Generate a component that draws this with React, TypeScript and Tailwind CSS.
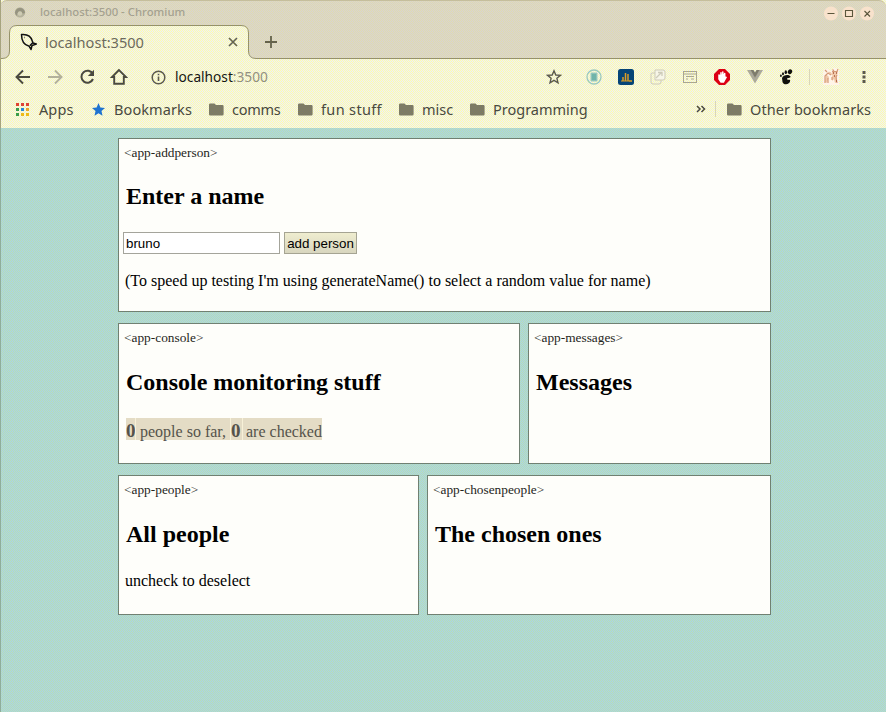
import type { ReactNode } from "react";

const UI = "font-['Noto_Sans',sans-serif]";

function Folder() {
  return (
    <svg width="15" height="13" viewBox="0 0 15 13" className="mt-px shrink-0">
      <path d="M1.2 0.5H5.5L7 2H13.4Q14.6 2 14.6 3.2V11.2Q14.6 12.5 13.4 12.5H1.2Q0 12.5 0 11.2V1.7Q0 .5 1.2 .5Z" fill="#7d7b65" />
    </svg>
  );
}

function Bookmark({ className, children }: { className: string; children: ReactNode }) {
  return <span className={`shrink-0 whitespace-nowrap text-[14.5px] leading-5 text-[#4a4a40] ${className}`}>{children}</span>;
}

function TitleBar() {
  return (
    <div className="flex h-[25px] items-center pl-[14px] pr-[10px]">
      <svg width="12" height="12" viewBox="0 0 12 12">
        <circle cx="6" cy="5.4" r="5.2" fill="#b5b29c" />
        <path d="M1 6A5 5 0 0 1 11 6L8.6 6.7A2.7 2.7 0 0 0 3.4 6.2L2.5 9Z" fill="#969480" />
        <circle cx="6" cy="6.5" r="2.2" fill="#cecbb3" />
      </svg>
      <span className="-mt-px ml-[14px] w-[145px] whitespace-nowrap text-[11.3px] font-medium leading-4 tracking-[0.03px] text-[#a4a190]">localhost:3500 - Chromium</span>
      <svg width="52" height="16" viewBox="0 0 52 16" className="ml-auto mt-[2px]">
        <g fill="#f8e2cc">
          <circle cx="7" cy="7.5" r="7" /><circle cx="25" cy="7.5" r="7" /><circle cx="43" cy="7.5" r="7" />
        </g>
        <path d="M3.5 7.5H10.5M21.5 4.5H28.5V10.5H21.5ZM40.5 5L46 10.5M46 5L40.5 10.5" fill="none" stroke="#5b563c" strokeWidth="1.1" />
      </svg>
    </div>
  );
}

function TabStrip() {
  return (
    <div className="relative h-[34px]">
      <svg width="886" height="34" viewBox="0 0 886 34" className="absolute inset-0">
        <defs>
          <pattern id="tabTexture" width="2" height="2" patternUnits="userSpaceOnUse">
            <path fill="#ffffaa" d="M0 0H2V2H0Z" />
            <path fill="#ededfa" d="M0 0H1V1H0ZM1 1H2V2H1Z" shapeRendering="crispEdges" />
          </pattern>
        </defs>
        <path d="M0 33.5H2Q9.5 33.5 9.5 26V8Q9.5 .5 17 .5H241Q248.5 .5 248.5 8V26Q248.5 33.5 256 33.5H886V34H0Z" fill="url(#tabTexture)" />
        <path d="M0 33.5H2Q9.5 33.5 9.5 26V8Q9.5 .5 17 .5H241Q248.5 .5 248.5 8V26Q248.5 33.5 256 33.5H886" fill="none" stroke="#96926b" />
      </svg>
      <div className="relative flex h-[34px] items-center pl-[20px]">
        <svg width="18" height="18" viewBox="0 0 18 18" fill="none" stroke="#111" strokeWidth="1.5" strokeLinejoin="round">
          <path d="M1.5 1.5C7 1 11 3 12.3 8L13 10L16.3 11L12 12.5L11 16.5L9.2 13.3C4 12 1.5 7 1.5 1.5Z" />
          <path d="M4.3 4.6H4.8M9.8 12.8L12.7 9.8" />
        </svg>
        <span className="ml-[7px] w-[182px] whitespace-nowrap text-[14.6px] leading-5 text-[#6d6b5d]">localhost:3500</span>
        <svg width="12" height="12" viewBox="0 0 12 12" className="shrink-0"><path d="M2 2L10 10M10 2L2 10" stroke="#656450" strokeWidth="1.7" /></svg>
        <svg width="14" height="14" viewBox="0 0 14 14" className="ml-[25px] shrink-0"><path d="M7 1V13M1 7H13" stroke="#65634b" strokeWidth="1.8" /></svg>
      </div>
    </div>
  );
}

function Navigation() {
  return (
    <div className="flex h-[36px] items-center pl-[15px]">
      <svg width="16" height="16" viewBox="0 0 16 16" fill="none" stroke="#4b4a3f" strokeWidth="1.9"><path d="M15 8H2M8 1.5L1.5 8L8 14.5" /></svg>
      <svg width="16" height="16" viewBox="0 0 16 16" fill="none" stroke="#b3b19b" strokeWidth="1.9" className="ml-[16px]"><path d="M1 8H14M8 1.5L14.5 8L8 14.5" /></svg>
      <svg width="16" height="16" viewBox="0 0 16 16" fill="none" stroke="#4b4a3f" strokeWidth="2" className="ml-[16px]"><path d="M13.8 5A6 6 0 1 0 14 10" /><path d="M15 .8V7H8.8Z" fill="#4b4a3f" stroke="none" /></svg>
      <svg width="18" height="18" viewBox="0 0 18 18" fill="none" stroke="#4b4a3f" strokeWidth="1.9" className="ml-[15px]"><path d="M9 2L2 9H4.2V15.8H13.8V9H16Z" /></svg>
      <svg width="15" height="15" viewBox="0 0 15 15" className="ml-[23px]"><circle cx="7.5" cy="7.5" r="6.3" fill="none" stroke="#5c5a4c" strokeWidth="1.5" /><path d="M7.5 6.5V11M7.5 3.7V5.2" stroke="#5c5a4c" strokeWidth="1.6" /></svg>
      <span className="ml-[9px] w-[371px] whitespace-nowrap text-[13.7px] leading-5 text-[#171713]">localhost<span className="text-[#929080]">:3500</span></span>
      <svg width="16" height="16" viewBox="0 0 16 16" className="shrink-0"><path d="M8 1.8L9.8 6L14.4 6.4L10.9 9.3L12 13.8L8 11.4L4 13.8L5.1 9.3L1.6 6.4L6.2 6Z" fill="none" stroke="#5c5a4c" strokeWidth="1.4" /></svg>
      <svg width="16" height="16" viewBox="0 0 16 16" className="ml-[24px] shrink-0" fill="none" stroke="#9bc9be"><circle cx="8" cy="8" r="7" strokeWidth="1.3" /><path d="M5 4H11V12H5Z" fill="#83bfb4" /><path d="M6 6H10M6 8H10M6 10H10" stroke="#5fa99f" /></svg>
      <svg width="16" height="16" viewBox="0 0 16 16" className="ml-[16px] shrink-0"><rect width="16" height="16" rx="2.5" fill="#054477" /><path d="M5 12V8M7.5 12V4M10 12V5M11 12H14" stroke="#d99b27" strokeWidth="1.5" /><path d="M3 12H11" stroke="#d99b27" /></svg>
      <svg width="16" height="16" viewBox="0 0 16 16" className="ml-[16px] shrink-0" fill="none" stroke="#cecbb9"><path d="M5 1H13Q15 1 15 3V9Q15 11 13 11H5Z" fill="#f7f6e8" /><path d="M5 4H2Q1 4 1 5V13Q1 15 3 15H9Q11 15 11 13V11" /><path d="M6 9L12 3M8 3.5H12V7" strokeWidth="1.3" /></svg>
      <svg width="16" height="16" viewBox="0 0 16 16" className="ml-[16px] shrink-0" fill="none" stroke="#aaa790"><rect x="1.5" y="2.5" width="13" height="11" /><path d="M2 5H14M4 7.5H12M4 10H6M9 10H12" /></svg>
      <svg width="16" height="16" viewBox="0 0 16 16" className="ml-[16px] shrink-0"><path d="M5 0H11L16 5V11L11 16H5L0 11V5Z" fill="#dc0014" /><path d="M5 6V10L7 13H9.5L12 8.5L10.7 8V4.5M7 9V3.7M8.8 8.5V3" fill="#fff" stroke="#fff" strokeWidth="1.5" strokeLinecap="round" /></svg>
      <svg width="16" height="16" viewBox="0 0 16 16" className="ml-[17px] shrink-0"><path d="M0 1H4L8 8L12 1H16L8 14.5Z" fill="#acaa9a" /><path d="M3.5 1H6.5L8 3.5L9.5 1H12.5L8 8.8Z" fill="#7d7b6c" /></svg>
      <svg width="15" height="16" viewBox="0 0 15 16" className="ml-[16px] shrink-0" fill="#10100c">
        <ellipse cx="11" cy="2.7" rx="2.1" ry="2.5" transform="rotate(25 11 2.7)" /><ellipse cx="6.8" cy="3.2" rx="1.2" ry="1.9" /><ellipse cx="4" cy="4.8" rx="1" ry="1.5" /><ellipse cx="1.9" cy="6.8" rx=".9" ry="1.2" />
        <path d="M3 9C4 5.5 10.5 5 11.5 7.5C12 9.5 8 8.5 8 10C9 12 11 9.5 11.2 11.5C11 16 4.5 16.5 3.5 13Z" />
      </svg>
      <div className="ml-[15px] h-4 w-px bg-[#d9d5b8]" />
      <svg width="17" height="18" viewBox="0 0 17 18" className="ml-[13px] shrink-0">
        <path d="M1 1H5L8 3L11 0L16 1V17H0V6Z" fill="#fff4e8" />
        <path d="M5 4Q8 3 9 6V3L15 3L14 8L10 8ZM3 6L6 9L4 15L2 14ZM9 8L14 8L14 14L12 15L11 11L9 13Z" fill="#f0c8a8" />
        <path d="M2 15L2 8L5 5L8 7M9 3.5L14 3.5L15 1M14 7L13 9L14 15M9 12V9M5 10V15M2 2L4 4M9.5 1.500L11 3" fill="none" stroke="#d59a78" strokeWidth="1.2" />
        <path d="M10 5H11M13 5H14M11 8H12M13 13H14" stroke="#a5563c" strokeWidth="1.5" />
      </svg>
      <svg width="4" height="14" viewBox="0 0 4 14" className="ml-[22px] shrink-0"><path d="M.5 1H3.5V4H.5ZM.5 5.5H3.5V8.5H.5ZM.5 10H3.5V13H.5Z" fill="#5c5a4c" /></svg>
    </div>
  );
}

function Bookmarks() {
  return (
    <div className="flex h-[27px] items-center pl-[15px]">
      <svg width="14" height="14" viewBox="0 0 14 14" className="shrink-0" shapeRendering="crispEdges">
        <path d="M1 1H4V4H1ZM6 1H9V4H6ZM11 1H14V4H11Z" fill="#df4335" />
        <path d="M1 6H4V9H1Z" fill="#3a9b4b" /><path d="M6 6H9V9H6Z" fill="#2585db" /><path d="M11 6H14V9H11Z" fill="#e8a629" />
        <path d="M1 11H4V14H1Z" fill="#3a9b4b" /><path d="M6 11H9V14H6ZM11 11H14V14H11Z" fill="#edba18" />
      </svg>
      <Bookmark className="ml-[10px] w-[53px] tracking-[0.1px]">Apps</Bookmark>
      <svg width="13" height="13" viewBox="0 0 13 13" className="mt-px shrink-0"><path d="M6.5 0L8.4 4.5L13 4.9L9.5 8L10.5 12.8L6.5 10.3L2.5 12.8L3.5 8L0 4.9L4.6 4.5Z" fill="#1f73d1" /></svg>
      <Bookmark className="ml-[9px] w-[95px] tracking-[0.1px]">Bookmarks</Bookmark>
      <Folder />
      <Bookmark className="ml-[8px] w-[66px] tracking-[-0.25px]">comms</Bookmark>
      <Folder />
      <Bookmark className="ml-[8px] w-[78px] tracking-[0.35px]">fun stuff</Bookmark>
      <Folder />
      <Bookmark className="ml-[8px] w-[48px]">misc</Bookmark>
      <Folder />
      <Bookmark className="ml-[8px] w-[203px]">Programming</Bookmark>
      <svg width="10" height="8" viewBox="0 0 10 8" className="shrink-0"><path d="M1 1L4 4L1 7M5.5 1L8.5 4L5.5 7" fill="none" stroke="#4b4a3f" strokeWidth="1.5" /></svg>
      <div className="ml-[9px] h-4 w-px bg-[#d9d5b8]" />
      <div className="ml-[11px] flex"><Folder /></div>
      <Bookmark className="ml-[8px] tracking-[0.07px]">Other bookmarks</Bookmark>
    </div>
  );
}

function Panel({ tag, title, className, headingClass = "mt-[23px]", children }: { tag: string; title: string; className: string; headingClass?: string; children?: ReactNode }) {
  return (
    <section className={`border border-[#708072] bg-[#fefefa] pl-[5px] pt-[6px] text-black ${className}`}>
      <div className="text-[13.333px] leading-[15px] text-[#25251b]">&lt;{tag}&gt;</div>
      <h2 className={`ml-[2px] text-2xl font-bold leading-[28px] ${headingClass}`}>{title}</h2>
      {children}
    </section>
  );
}

export default function App() {
  return (
    <div className="h-[712px] w-[886px] overflow-hidden bg-[#f6f6d2]">
      <div className={`${UI} h-[128px] overflow-hidden border-l border-[#a6a37f] bg-[repeating-conic-gradient(#ffffaa_0_25%,#ededfa_0_50%)] bg-[length:2px_2px]`}>
        <header className="-ml-px">
          <div className="rounded-t-[7px] border-t border-[#c5be9c] bg-[repeating-conic-gradient(#e0dbae_0_25%,#d8d3d2_0_50%)] bg-[length:2px_2px]">
            <div className="-mt-px"><TitleBar /><TabStrip /></div>
          </div>
          <Navigation />
          <Bookmarks />
        </header>
      </div>
      <main className="h-[584px] border-l border-[#8fad9c] bg-[repeating-conic-gradient(#b8dfb3_0_25%,#a9d2e8_0_50%)] bg-[length:2px_2px] pl-[117px] pt-[10px] font-['Liberation_Serif',serif]">
        <div className="flex w-[653px] flex-col gap-[11px]">
          <Panel tag="app-addperson" title="Enter a name" className="h-[174px]" headingClass="mt-[22px]">
            <div className="-ml-px mt-[22px] flex gap-1 font-['Liberation_Sans',sans-serif] text-[13.333px] leading-5">
              <input defaultValue="bruno" className="h-[22px] w-[157px] border border-[#a4a49b] bg-white px-[2px] outline-none" />
              <button className="h-[22px] w-[73px] whitespace-nowrap border border-[#a5a492] bg-gradient-to-b from-[#efedcf] to-[#d8d6bf] pt-px leading-[19px]">add person</button>
            </div>
            <p className="ml-px mt-[17px] text-base leading-5">(To speed up testing I'm using generateName() to select a random value for name)</p>
          </Panel>
          <div className="flex gap-2">
            <Panel tag="app-console" title="Console monitoring stuff" className="h-[141px] w-[402px]">
              <p className="ml-[2px] mt-[22px] flex h-[22px] w-[196px] whitespace-nowrap bg-[#e4dcc5] text-base leading-[28px] text-[#55534b]">
                <b className="w-[9px] text-[19px] leading-[26px]">0</b><span className="w-[95px] border-l border-[#f7f1d8] pl-1">people so far,</span>
                <b className="w-[12px] border-l border-[#f7f1d8] text-[19px] leading-[26px]">0</b><span className="border-l border-[#f7f1d8] pl-[3px]">are checked</span>
              </p>
            </Panel>
            <Panel tag="app-messages" title="Messages" className="h-[141px] w-[243px]" />
          </div>
          <div className="flex gap-2">
            <Panel tag="app-people" title="All people" className="h-[140px] w-[301px]">
              <p className="ml-px mt-[23px] text-base leading-5">uncheck to deselect</p>
            </Panel>
            <Panel tag="app-chosenpeople" title="The chosen ones" className="h-[140px] w-[344px]" />
          </div>
        </div>
      </main>
    </div>
  );
}
